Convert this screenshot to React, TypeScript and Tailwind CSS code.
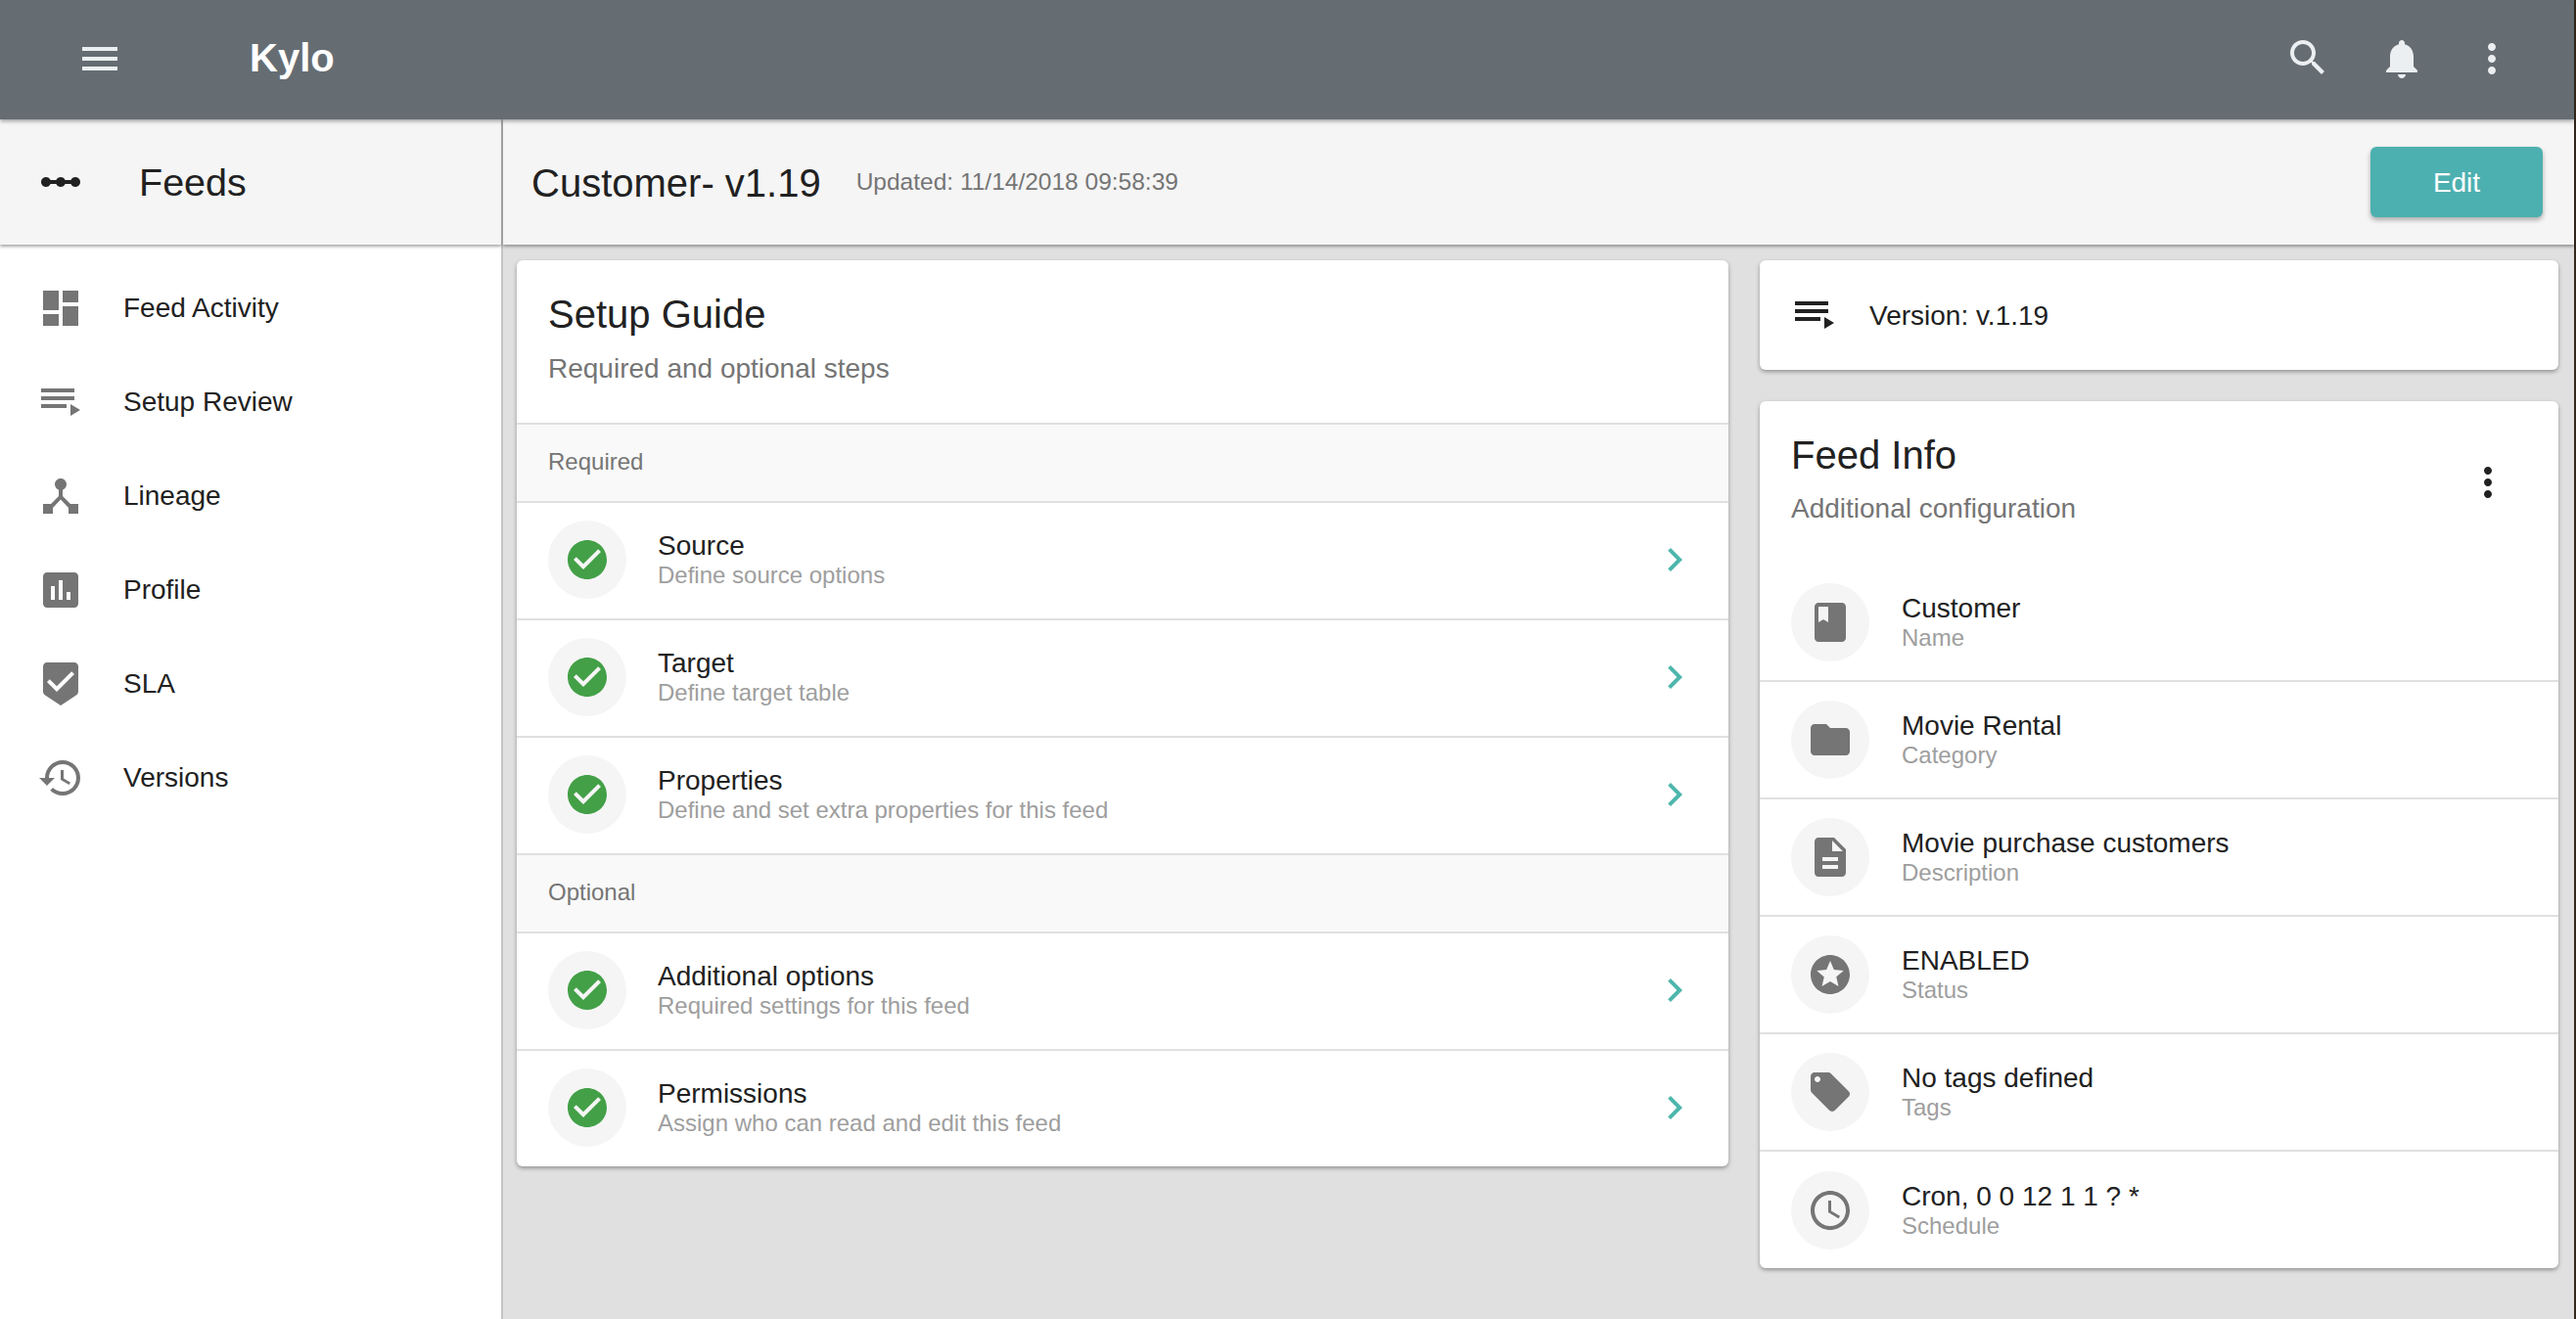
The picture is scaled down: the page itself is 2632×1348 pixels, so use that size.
const P = {
  menu: "M3 18h18v-2H3v2zm0-5h18v-2H3v2zm0-7v2h18V6H3z",
  search: "M15.5 14h-.79l-.28-.27C15.41 12.59 16 11.11 16 9.5 16 5.91 13.09 3 9.5 3S3 5.91 3 9.5 5.91 16 9.5 16c1.61 0 3.09-.59 4.23-1.57l.27.28v.79l5 4.99L20.49 19l-4.99-5zm-6 0C7.01 14 5 11.99 5 9.5S7.01 5 9.5 5 14 7.01 14 9.5 11.99 14 9.5 14z",
  bell: "M12 22c1.1 0 2-.9 2-2h-4c0 1.1.89 2 2 2zm6-6v-5c0-3.07-1.64-5.64-4.5-6.32V4c0-.83-.67-1.5-1.5-1.5s-1.5.67-1.5 1.5v.68C7.63 5.36 6 7.92 6 11v5l-2 2v1h16v-1l-2-2z",
  more: "M12 8c1.1 0 2-.9 2-2s-.9-2-2-2-2 .9-2 2 .9 2 2 2zm0 2c-1.1 0-2 .9-2 2s.9 2 2 2 2-.9 2-2-.9-2-2-2zm0 6c-1.1 0-2 .9-2 2s.9 2 2 2 2-.9 2-2-.9-2-2-2z",
  linear: "M19.5 9.5c-1.03 0-1.9.62-2.29 1.5h-2.92c-.39-.88-1.26-1.5-2.29-1.5s-1.9.62-2.29 1.5H6.79c-.39-.88-1.26-1.5-2.29-1.5C3.12 9.5 2 10.62 2 12s1.12 2.5 2.5 2.5c1.03 0 1.9-.62 2.29-1.5h2.92c.39.88 1.26 1.5 2.29 1.5s1.9-.62 2.29-1.5h2.92c.39.88 1.26 1.5 2.29 1.5 1.38 0 2.5-1.12 2.5-2.5s-1.12-2.5-2.5-2.5z",
  dashboard: "M3 13h8V3H3v10zm0 8h8v-6H3v6zm10 0h8V11h-8v10zm0-18v6h8V3h-8z",
  playlist: "M19 9H2v2h17V9zm0-4H2v2h17V5zM2 15h13v-2H2v2zm15-2v6l5-3-5-3z",
  hub: "M17 16l-4-4V8.82C14.16 8.4 15 7.3 15 6c0-1.66-1.34-3-3-3S9 4.34 9 6c0 1.3.84 2.4 2 2.82V12l-4 4H3v5h5v-3.05l4-4.2 4 4.2V21h5v-5h-4z",
  assessment: "M19 3H5c-1.1 0-2 .9-2 2v14c0 1.1.9 2 2 2h14c1.1 0 2-.9 2-2V5c0-1.1-.9-2-2-2zM9 17H7v-7h2v7zm4 0h-2V7h2v10zm4 0h-2v-4h2v4z",
  beenhere: "M19 1H5c-1.1 0-1.99.9-1.99 2L3 15.93c0 .69.35 1.3.88 1.66L12 23l8.11-5.41c.53-.36.88-.97.88-1.66L21 3c0-1.1-.9-2-2-2zm-9 15l-5-5 1.41-1.41L10 13.17l7.59-7.59L19 7l-9 9z",
  history: "M13 3c-4.97 0-9 4.03-9 9H1l3.89 3.89.07.14L9 12H6c0-3.87 3.13-7 7-7s7 3.13 7 7-3.13 7-7 7c-1.93 0-3.68-.79-4.94-2.06l-1.42 1.42C8.27 19.99 10.51 21 13 21c4.97 0 9-4.03 9-9s-4.03-9-9-9zm-1 5v5l4.28 2.54.72-1.21-3.5-2.08V8H12z",
  check: "M12 2C6.48 2 2 6.48 2 12s4.48 10 10 10 10-4.48 10-10S17.52 2 12 2zm-2 15l-5-5 1.41-1.41L10 14.17l7.59-7.59L19 8l-9 9z",
  chevron: "M10 6L8.59 7.41 13.17 12l-4.58 4.59L10 18l6-6z",
  book: "M18 2H6c-1.1 0-2 .9-2 2v16c0 1.1.9 2 2 2h12c1.1 0 2-.9 2-2V4c0-1.1-.9-2-2-2zM6 4h5v8l-2.5-1.5L6 12V4z",
  folder: "M10 4H4c-1.1 0-1.99.9-1.99 2L2 18c0 1.1.9 2 2 2h16c1.1 0 2-.9 2-2V8c0-1.1-.9-2-2-2h-8l-2-2z",
  description: "M14 2H6c-1.1 0-1.99.9-1.99 2L4 20c0 1.1.89 2 1.99 2H18c1.1 0 2-.9 2-2V8l-6-6zm2 16H8v-2h8v2zm0-4H8v-2h8v2zm-3-5V3.5L18.5 9H13z",
  stars: "M11.99 2C6.47 2 2 6.48 2 12s4.47 10 9.99 10C17.52 22 22 17.52 22 12S17.52 2 11.99 2zm4.24 16L12 15.45 7.77 18l1.12-4.81-3.73-3.23 4.92-.42L12 5l1.92 4.53 4.92.42-3.73 3.23L16.23 18z",
  offer: "M21.41 11.58l-9-9C12.05 2.22 11.55 2 11 2H4c-1.1 0-2 .9-2 2v7c0 .55.22 1.05.59 1.42l9 9c.36.36.86.58 1.41.58.55 0 1.05-.22 1.41-.59l7-7c.37-.36.59-.86.59-1.41 0-.55-.23-1.06-.59-1.42zM5.5 7C4.67 7 4 6.33 4 5.5S4.67 4 5.5 4 7 4.67 7 5.5 6.33 7 5.5 7z",
  schedule: "M11.99 2C6.47 2 2 6.48 2 12s4.47 10 9.99 10C17.52 22 22 17.52 22 12S17.52 2 11.99 2zM12 20c-4.42 0-8-3.58-8-8s3.58-8 8-8 8 3.58 8 8-3.58 8-8 8zm.5-13H11v6l5.25 3.15.75-1.23-4.5-2.67z",
};

function Icon({ d, className }: { d: string; className?: string }) {
  return (
    <svg viewBox="0 0 24 24" fill="currentColor" className={"w-12 h-12 shrink-0 " + (className ?? "")}>
      <path d={d} />
    </svg>
  );
}

const nav = [
  ["Feed Activity", P.dashboard],
  ["Setup Review", P.playlist],
  ["Lineage", P.hub],
  ["Profile", P.assessment],
  ["SLA", P.beenhere],
  ["Versions", P.history],
];

function StepRow({ title, sub, last }: { title: string; sub: string; last?: boolean }) {
  return (
    <div className={"flex items-center pl-8 pr-[31px] pb-[2px] " + (last ? "h-[118px]" : "h-[120px] border-b-2 border-[#e0e0e0]")}>
      <div className="w-20 h-20 rounded-full bg-[#f5f5f5] flex items-center justify-center">
        <Icon d={P.check} className="text-[#43a047]" />
      </div>
      <div className="ml-8 flex-1 flex flex-col">
        <div className="text-[28px] leading-[32px] text-[#212121]">{title}</div>
        <div className="text-[24px] leading-[28px] text-[#9e9e9e]">{sub}</div>
      </div>
      <Icon d={P.chevron} className="text-[#4db6ac]" />
    </div>
  );
}

function SectionLabel({ children }: { children: string }) {
  return (
    <div className="h-[82px] flex items-center pl-8 pb-[2px] bg-[#f9f9f9] border-y-2 border-[#e0e0e0] text-[24px] text-[#757575]">
      {children}
    </div>
  );
}

const info = [
  ["Customer", "Name", P.book],
  ["Movie Rental", "Category", P.folder],
  ["Movie purchase customers", "Description", P.description],
  ["ENABLED", "Status", P.stars],
  ["No tags defined", "Tags", P.offer],
  ["Cron, 0 0 12 1 1 ? *", "Schedule", P.schedule],
];

export default function App() {
  return (
    <div className="w-[2632px] h-[1348px] overflow-hidden flex flex-col bg-[#35291c] font-['Liberation_Sans',Arial,sans-serif]">
      <header className="relative z-20 h-[122px] shrink-0 w-[2630px] bg-[#656d73] flex items-center pb-[2px] text-[#eceff1] shadow-[0_2px_4px_rgba(0,0,0,0.35)]">
        <Icon d={P.menu} className="ml-[78px]" />
        <div className="ml-[129px] mb-[3px] text-[40px] font-bold text-white">Kylo</div>
        <div className="flex-1" />
        <Icon d={P.search} className="-mt-[2px]" />
        <Icon d={P.bell} className="ml-12" />
        <Icon d={P.more} className="ml-11 mr-[60px]" />
      </header>
      <div className="flex-1 flex min-h-0 w-[2630px] bg-[#e0e0e0]">
        <aside className="w-[514px] shrink-0 bg-white border-r-2 border-[#c4c4c4] flex flex-col">
          <div className="relative z-10 h-[128px] shrink-0 bg-[#f5f5f5] flex items-center pl-[38px] shadow-[0_2px_3px_rgba(0,0,0,0.35)] text-[#212121]">
            <Icon d={P.linear} />
            <div className="ml-[56px] mt-px text-[39.5px]">Feeds</div>
          </div>
          <nav className="pt-[17px]">
            {nav.map(([label, d]) => (
              <div key={label} className="h-24 flex items-center pl-[38px] text-[#757575]">
                <Icon d={d} />
                <span className="ml-10 text-[28px] text-[#212121]">{label}</span>
              </div>
            ))}
          </nav>
        </aside>
        <main className="flex-1 min-w-0 flex flex-col">
          <div className="relative z-10 h-[128px] shrink-0 bg-[#f5f5f5] flex items-center pl-[29px] pr-8 shadow-[0_2px_3px_rgba(0,0,0,0.35)]">
            <div className="mt-px text-[40px] text-[#212121]">Customer- v1.19</div>
            <div className="ml-9 text-[24.5px] text-[#757575]">Updated: 11/14/2018 09:58:39</div>
            <div className="flex-1" />
            <button className="w-[176px] h-[72px] pt-[2px] rounded-md bg-[#4db0b0] text-white text-[28px] shadow-[0_3px_5px_rgba(0,0,0,0.3)]">Edit</button>
          </div>
          <div className="flex-1 flex items-start pt-4 pl-[14px] pr-4 gap-8">
            <section className="w-[1238px] bg-white rounded-md shadow-[0_2px_4px_rgba(0,0,0,0.35)] overflow-hidden">
              <div className="h-[166px] pl-8 pt-[32px]">
                <div className="text-[40px] leading-[46px] text-[#212121]">Setup Guide</div>
                <div className="mt-[17px] text-[28px] leading-[32px] text-[#757575]">Required and optional steps</div>
              </div>
              <SectionLabel>Required</SectionLabel>
              <StepRow title="Source" sub="Define source options" />
              <StepRow title="Target" sub="Define target table" />
              <StepRow title="Properties" sub="Define and set extra properties for this feed" last />
              <SectionLabel>Optional</SectionLabel>
              <StepRow title="Additional options" sub="Required settings for this feed" />
              <StepRow title="Permissions" sub="Assign who can read and edit this feed" last />
            </section>
            <div className="flex-1 flex flex-col gap-8">
              <section className="h-[112px] bg-white rounded-md shadow-[0_2px_4px_rgba(0,0,0,0.35)] flex items-center pl-[32px] text-[#212121]">
                <Icon d={P.playlist} />
                <span className="ml-8 mt-[2px] text-[28px]">Version: v.1.19</span>
              </section>
              <section className="bg-white rounded-md shadow-[0_2px_4px_rgba(0,0,0,0.35)] overflow-hidden">
                <div className="h-[167px] relative pl-8 pt-[32px]">
                  <div className="text-[40px] leading-[46px] text-[#212121]">Feed Info</div>
                  <div className="mt-[16px] text-[28px] leading-[32px] text-[#757575]">Additional configuration</div>
                  <Icon d={P.more} className="absolute right-[48px] top-[59px] text-[#212121]" />
                </div>
                {info.map(([t, s, d], i) => (
                  <div key={s} className={"flex items-center pl-8 " + (i < info.length - 1 ? "h-[120px] border-b-2 border-[#e0e0e0]" : "h-[119px]")}>
                    <div className="w-20 h-20 rounded-full bg-[#f5f5f5] flex items-center justify-center text-[#757575]">
                      <Icon d={d} />
                    </div>
                    <div className="ml-[33px] flex flex-col">
                      <div className="text-[28px] leading-[32px] text-[#212121]">{t}</div>
                      <div className="text-[24px] leading-[28px] text-[#9e9e9e]">{s}</div>
                    </div>
                  </div>
                ))}
              </section>
            </div>
          </div>
        </main>
      </div>
    </div>
  );
}
